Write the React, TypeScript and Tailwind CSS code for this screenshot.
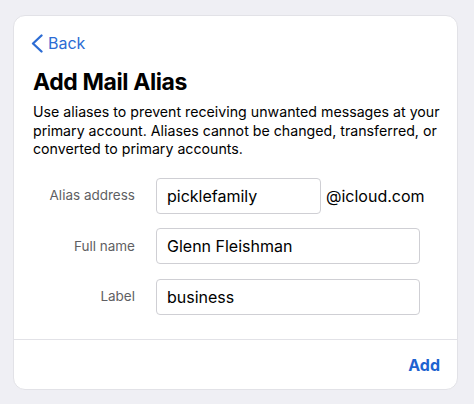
const font = { fontFamily: 'Inter, "Liberation Sans", sans-serif' };

const Field = ({ label, value, width, suffix }: { label: string; value: string; width: string; suffix?: string }) => (
  <div className="flex items-center h-[36px]">
    <div className="w-[102px] shrink-0 text-right text-[13.5px] text-[#5f5f63]">{label}</div>
    <div className={`ml-[21px] h-full ${width} rounded-[4px] border border-[#cfcfd4] bg-white flex items-center pl-[10px] text-[16px] text-black`}>
      {value}
    </div>
    {suffix && <div className="ml-[5px] text-[16px] text-black">{suffix}</div>}
  </div>
);

const App = () => {
  return (
    <div className="w-[474px] h-[404px] bg-[#efeff4] pt-[15px] pl-[13px]" style={font}>
      <div className="w-[445px] h-[375px] bg-white rounded-[12px] border border-[#e2e2e7] flex flex-col">
        {/* Content */}
        <div className="flex-1 pl-[19px] pt-[18px]">
          <div className="flex items-center h-[18px] text-[#2c6cd4]">
            <svg width="14" height="19" viewBox="0 0 14 19" className="-ml-[3px]">
              <polyline points="11.5,1.5 3,9.5 11.5,17.5" fill="none" stroke="currentColor" strokeWidth="2.3" strokeLinecap="round" strokeLinejoin="round" />
            </svg>
            <span className="text-[16px] ml-[4px]">Back</span>
          </div>
          <h1 className="mt-[16px] text-[23px] font-bold tracking-[-0.4px] leading-[28px] text-black">Add Mail Alias</h1>
          <p className="mt-[7px] text-[14.2px] leading-[18.5px] text-black">
            Use aliases to prevent receiving unwanted messages at your
            <br />
            primary account. Aliases cannot be changed, transferred, or
            <br />
            converted to primary accounts.
          </p>
          <div className="mt-[19px] flex flex-col gap-[14.5px]">
            <Field label="Alias address" value="picklefamily" width="w-[165px]" suffix="@icloud.com" />
            <Field label="Full name" value="Glenn Fleishman" width="w-[264px]" />
            <Field label="Label" value="business" width="w-[264px]" />
          </div>
        </div>
        {/* Footer */}
        <div className="h-[50px] border-t border-[#e2e2e7] flex items-center justify-end pr-[17px]">
          <span className="text-[16px] font-bold text-[#1e63d0]">Add</span>
        </div>
      </div>
    </div>
  );
};

export default App;
